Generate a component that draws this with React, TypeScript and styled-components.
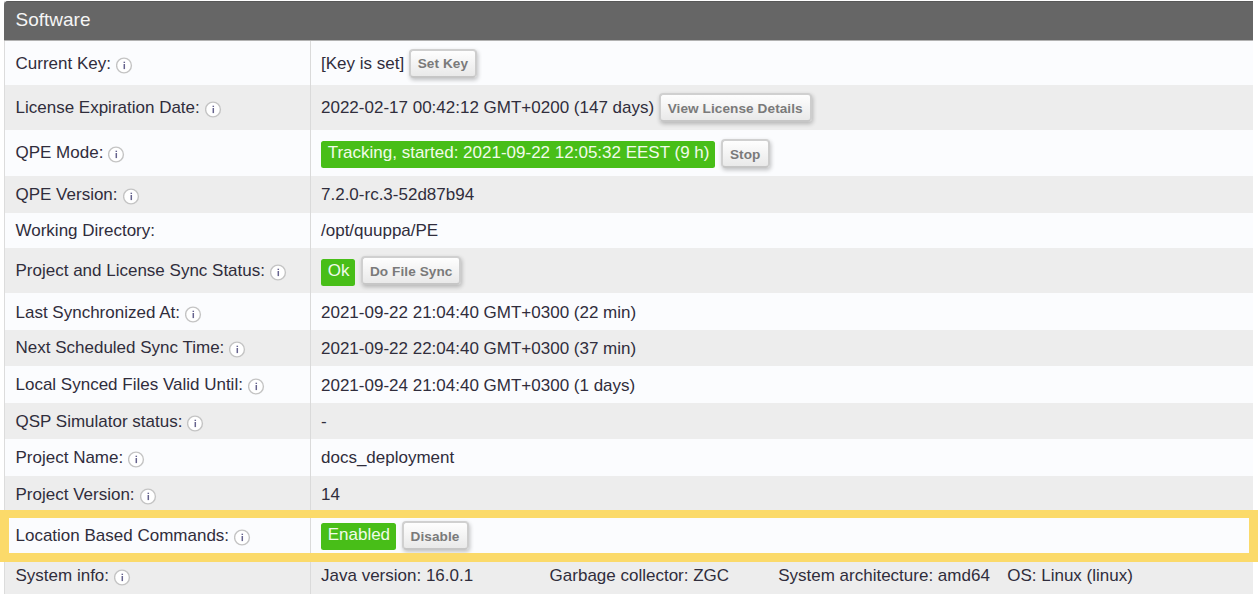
import React from "react";
import styled, { createGlobalStyle } from "styled-components";

const GlobalStyle = createGlobalStyle`
  * { box-sizing: border-box; }
  body {
    margin: 0;
    background: #fff;
    color: #302d3c;
    font: 17px/19px "Liberation Sans", Arial, sans-serif;
    overflow: hidden;
  }
`;

const Page = styled.main`
  height: 594px;
  padding: 1px 5px 0 4px;
  overflow: hidden;
`;

const Panel = styled.section`
  border-left: 1px solid #dcdcdc;
`;

const PanelHeader = styled.h2`
  height: 40px;
  margin: 0 0 0 -1px;
  padding: 7px 11.5px;
  border-top: 1px solid #585858;
  border-bottom: 1px solid #b2b2b2;
  border-radius: 4px 0 0 0;
  background: #666;
  color: #f5f5f5;
  font-size: 19px;
  font-weight: 400;
  line-height: 22px;
`;

const Row = styled.div<{ $height: number; $shaded: boolean; $raised?: boolean }>`
  position: relative;
  z-index: ${(p) => (p.$raised ? 1 : "auto")};
  display: grid;
  grid-template-columns: 306px 1fr;
  height: ${(p) => p.$height}px;
  background: ${(p) => (p.$shaded ? "#ededed" : "#fbfcfe")};
`;

const LabelCell = styled.div<{ $top: number }>`
  display: flex;
  align-items: flex-start;
  gap: 5px;
  padding: ${(p) => p.$top}px 0 0 10.5px;
  border-right: 1px solid #dadada;
  white-space: nowrap;
`;

const ValueCell = styled.div`
  display: flex;
  align-items: flex-start;
  padding-left: 10px;
  white-space: nowrap;
`;

const Value = styled.span<{ $top: number; $width?: number }>`
  margin-top: ${(p) => p.$top}px;
  ${(p) => (p.$width ? `width: ${p.$width}px;` : "")}
`;

const Badge = styled.span<{ $top: number; $textTop: number }>`
  height: 27px;
  margin: ${(p) => p.$top}px 1px 0 0.4px;
  padding: ${(p) => p.$textTop}px 6px 0 6.3px;
  border-radius: 2.5px;
  background: #48be18;
  color: #f1fbea;
`;

const Button = styled.button<{ $top: number }>`
  height: 29px;
  margin: ${(p) => p.$top}px 0 0 4.5px;
  padding: 1px 7px 0;
  border: 1.5px solid #cbcbcb;
  border-width: 2px;
  border-color: #d0d0d0 #cdcdcd #c6c6c6 #d0d0d0;
  border-radius: 4px;
  background: linear-gradient(#fefefe, #e9e9e9);
  box-shadow: 1px 2px 4px rgba(0, 0, 0, 0.24);
  color: #7a7a7a;
  font: bold 13.6px/15px "Liberation Sans", Arial, sans-serif;
  letter-spacing: 0.08px;
`;

const InfoSvg = styled.svg`
  flex: none;
  margin-top: 2.5px;
`;

const Highlight = styled.div`
  position: absolute;
  top: -3px;
  left: -5px;
  width: 1258px;
  height: 52px;
  border: 9px solid #fbda6a;
  border-top-width: 8px;
`;

function InfoIcon() {
  return (
    <InfoSvg width="17" height="17" viewBox="0 0 17 17">
      <circle cx="8" cy="8.5" r="7.4" fill="#fff" stroke="#c4c4c4" strokeWidth="1.4" />
      <path d="M8.3 7v5.1" fill="none" stroke="#66638e" strokeWidth="1.5" />
      <rect x="7.55" y="4.7" width="1.5" height="1.3" fill="#66638e" />
    </InfoSvg>
  );
}

type Entry = {
  label: string;
  height: number;
  top: number;
  valueTop?: number;
  info?: boolean;
  text?: string;
  badge?: string;
  badgeTop?: number;
  badgeTextTop?: number;
  action?: string;
  actionTop?: number;
  highlighted?: boolean;
  parts?: { text: string; width?: number }[];
};

const entries: Entry[] = [
  { label: "Current Key:", height: 44, top: 13, text: "[Key is set]", action: "Set Key", actionTop: 7.5 },
  { label: "License Expiration Date:", height: 45, top: 13, valueTop: 13, text: "2022-02-17 00:42:12 GMT+0200 (147 days)", action: "View License Details", actionTop: 8 },
  { label: "QPE Mode:", height: 46, top: 13, badge: "Tracking, started: 2021-09-22 12:05:32 EEST (9 h)", badgeTop: 10.6, badgeTextTop: 2.6, action: "Stop", actionTop: 9 },
  { label: "QPE Version:", height: 37, top: 9, text: "7.2.0-rc.3-52d87b94" },
  { label: "Working Directory:", height: 35, top: 8, info: false, text: "/opt/quuppa/PE" },
  { label: "Project and License Sync Status:", height: 45, top: 13, badge: "Ok", badgeTop: 10.6, badgeTextTop: 2.6, action: "Do File Sync", actionTop: 8 },
  { label: "Last Synchronized At:", height: 37, top: 10, text: "2021-09-22 21:04:40 GMT+0300 (22 min)" },
  { label: "Next Scheduled Sync Time:", height: 36, top: 8, valueTop: 9, text: "2021-09-22 22:04:40 GMT+0300 (37 min)" },
  { label: "Local Synced Files Valid Until:", height: 37, top: 9, valueTop: 10, text: "2021-09-24 21:04:40 GMT+0300 (1 days)" },
  { label: "QSP Simulator status:", height: 36, top: 9, text: "-" },
  { label: "Project Name:", height: 37, top: 9, text: "docs_deployment" },
  { label: "Project Version:", height: 37, top: 9, text: "14" },
  { label: "Location Based Commands:", height: 44, top: 13, badge: "Enabled", badgeTop: 9.8, badgeTextTop: 2.4, action: "Disable", actionTop: 8, highlighted: true },
  {
    label: "System info:",
    height: 37,
    top: 9,
    parts: [
      { text: "Java version: 16.0.1", width: 228.6 },
      { text: "Garbage collector: ZGC", width: 228.6 },
      { text: "System architecture: amd64", width: 229 },
      { text: "OS: Linux (linux)" },
    ],
  },
];

function EntryRow({ entry, shaded }: { entry: Entry; shaded: boolean }) {
  const valueTop = entry.valueTop ?? entry.top;
  return (
    <Row $height={entry.height} $shaded={shaded} $raised={entry.highlighted}>
      <LabelCell $top={entry.top}>
        <span>{entry.label}</span>
        {entry.info !== false && <InfoIcon />}
      </LabelCell>
      <ValueCell>
        {entry.text && <Value $top={valueTop}>{entry.text}</Value>}
        {entry.badge && (
          <Badge $top={entry.badgeTop ?? 11} $textTop={entry.badgeTextTop ?? 3}>
            {entry.badge}
          </Badge>
        )}
        {entry.action && <Button $top={entry.actionTop ?? 8}>{entry.action}</Button>}
        {entry.parts?.map((part) => (
          <Value key={part.text} $top={valueTop} $width={part.width}>
            {part.text}
          </Value>
        ))}
      </ValueCell>
      {entry.highlighted && <Highlight />}
    </Row>
  );
}

export default function App() {
  return (
    <Page>
      <GlobalStyle />
      <Panel>
        <PanelHeader>Software</PanelHeader>
        {entries.map((entry, index) => (
          <EntryRow key={entry.label} entry={entry} shaded={index % 2 === 1} />
        ))}
      </Panel>
    </Page>
  );
}
